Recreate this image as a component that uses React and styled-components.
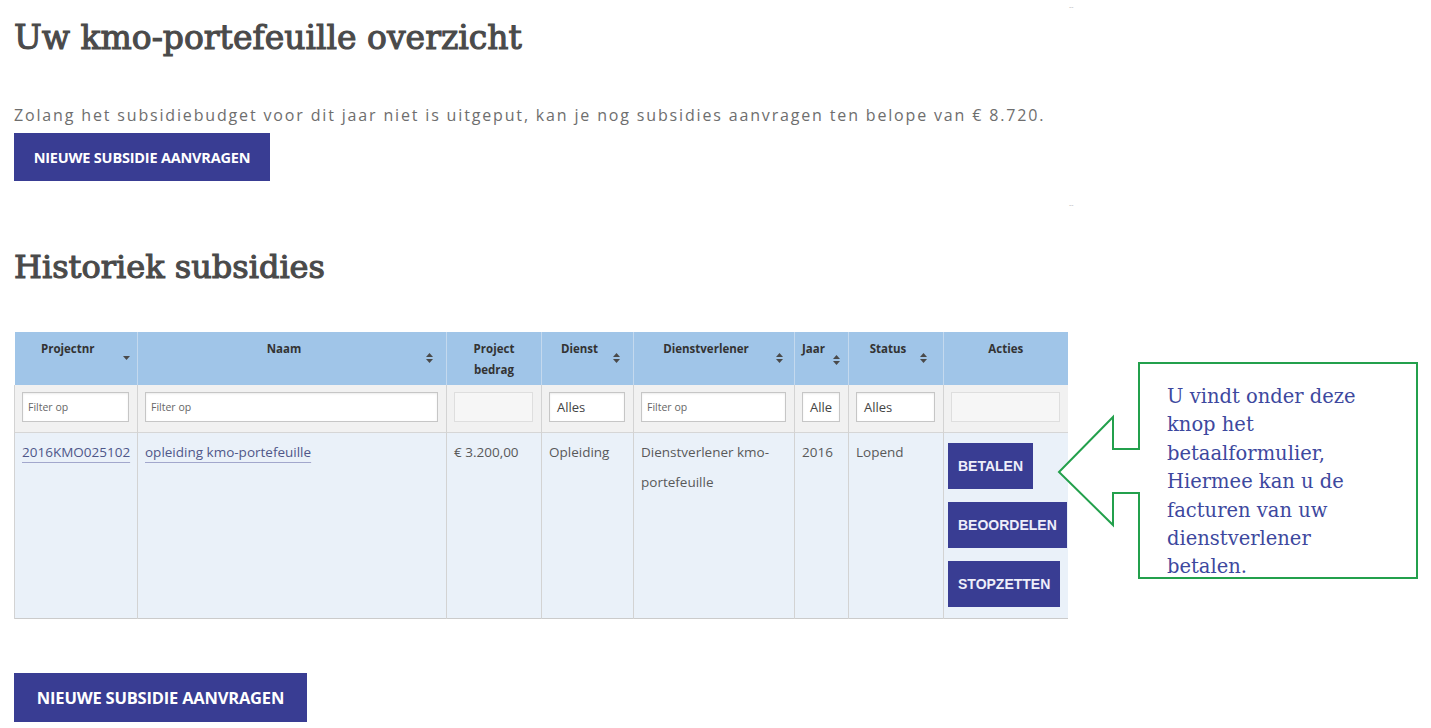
import React from 'react';
import styled, { createGlobalStyle } from 'styled-components';

const GlobalStyle = createGlobalStyle`
  html, body { margin: 0; padding: 0; background: #ffffff; }
  body { font-family: "Open Sans", "Liberation Sans", Arial, sans-serif; }
  * { box-sizing: border-box; }
`;

const Page = styled.div`
  position: relative;
  width: 1431px;
  height: 728px;
  overflow: hidden;
  padding: 0 0 0 14px;
`;

const Title = styled.h1`
  font-family: "DejaVu Serif", "Liberation Serif", serif;
  font-weight: 400;
  font-size: 33px;
  line-height: 40px;
  color: #4a4a4a;
  -webkit-text-stroke: 1.1px #4a4a4a;
  margin: 18px 0 0;
  letter-spacing: 0;
`;

const Intro = styled.p`
  font-size: 16px;
  line-height: 24px;
  color: #6e6e6e;
  margin: 45px 0 0;
  letter-spacing: 1.84px;
`;

const PrimaryButton = styled.button`
  display: block;
  width: ${(p) => (p.$large ? 293 : 256)}px;
  height: ${(p) => (p.$large ? 49 : 48)}px;
  margin: ${(p) => p.$mt}px 0 0;
  padding: 0;
  border: 0;
  background: #393d93;
  color: #ffffff;
  font-family: "Open Sans", "Liberation Sans", sans-serif;
  font-weight: 700;
  font-size: ${(p) => (p.$large ? 16.5 : 14.5)}px;
  letter-spacing: -0.2px;
  text-transform: uppercase;
`;

const SectionTitle = styled.h2`
  font-family: "DejaVu Serif", "Liberation Serif", serif;
  font-weight: 400;
  font-size: 32px;
  line-height: 40px;
  color: #4a4a4a;
  -webkit-text-stroke: 1.1px #4a4a4a;
  margin: 66px 0 0;
  letter-spacing: 0;
`;

const Table = styled.table`
  margin-top: 45px;
  width: 1053px;
  table-layout: fixed;
  border-collapse: collapse;
  font-family: "Open Sans", "Liberation Sans", sans-serif;
  border-bottom: 1px solid #cbcbcb;
`;

const HeadCell = styled.th`
  position: relative;
  height: 53px;
  vertical-align: top;
  padding: ${(p) => (p.$sortable ? '6px 22px 0 6px' : '6px 6px 0')};
  background: #a0c5e8;
  color: #333333;
  font-weight: 700;
  font-size: 11.5px;
  line-height: 21px;
  text-align: center;
  border-left: 1px solid #c4d9ee;
  &:first-child { border-left: 0; }
`;

const SortIcon = styled.svg`
  position: absolute;
  right: ${(p) => p.$right}px;
  top: ${(p) => p.$top}px;
`;

const FilterRow = styled.tr`
  background: #f1f1f1;
  border-bottom: 1px solid #d6d6d6;
`;

const FilterCell = styled.td`
  height: 47px;
  padding: 7px 8px 0 7px;
  vertical-align: top;
  border-left: 1px solid #d3d3d3;
`;

const FilterInput = styled.div`
  height: 30px;
  width: 100%;
  border: 1px solid ${(p) => (p.$disabled ? '#dedede' : '#c6c6c6')};
  box-shadow: ${(p) => (p.$disabled ? 'none' : 'inset 0 1px 2px rgba(0,0,0,0.08)')};
  background: ${(p) => (p.$disabled ? '#f6f6f6' : '#ffffff')};
  color: ${(p) => (p.$select ? '#444444' : '#666666')};
  font-size: ${(p) => (p.$select ? '13px' : '10.5px')};
  line-height: 28px;
  padding: 0 ${(p) => (p.$select ? '7px' : '5px')};
  white-space: nowrap;
  overflow: hidden;
`;

const DataRow = styled.tr`
  background: #eaf1f9;
`;

const DataCell = styled.td`
  height: 186px;
  vertical-align: top;
  padding: ${(p) => (p.$actions ? '10px 0 0 4px' : '4px 7px')};
  font-size: 13.5px;
  line-height: 30px;
  color: #595959;
  border-left: 1px solid #d3d3d3;
  overflow: visible;
`;

const RowLink = styled.a`
  color: #4f5789;
  text-decoration: underline;
  text-decoration-color: #a2a7cc;
  text-underline-offset: 5px;
`;

const ActionStack = styled.div`
  display: flex;
  flex-direction: column;
  align-items: flex-start;
  gap: 13px;
`;

const ActionButton = styled.button`
  height: 46px;
  padding: 0 10px;
  border: 0;
  background: #393d93;
  color: #eeeefa;
  font-family: "Liberation Sans", Arial, sans-serif;
  font-weight: 700;
  font-size: 14px;
  white-space: nowrap;
`;

const Callout = styled.div`
  position: absolute;
  left: 1057px;
  top: 362px;
  width: 362px;
  height: 218px;
`;

const CalloutShape = styled.svg`
  position: absolute;
  left: 0;
  top: 0;
`;

const CalloutText = styled.div`
  position: absolute;
  left: 110px;
  top: 21px;
  font-family: "DejaVu Serif", "Liberation Serif", serif;
  font-size: 19.5px;
  line-height: 28.4px;
  color: #3d489e;
  white-space: nowrap;
`;

const Mark = styled.span`
  position: absolute;
  left: 1069px;
  top: ${(p) => p.$top}px;
  font-size: 7px;
  line-height: 8px;
  color: #b5b5b5;
`;

const columns = [
  { key: 'projectnr', label: 'Projectnr', width: 123, sort: 'desc', right: 7, top: 24, filter: { text: 'Filter op' } },
  { key: 'naam', label: 'Naam', width: 309, sort: 'both', right: 13, top: 21, filter: { text: 'Filter op' } },
  { key: 'bedrag', label: ['Project', 'bedrag'], width: 95, filter: { disabled: true } },
  { key: 'dienst', label: 'Dienst', width: 92, sort: 'both', right: 13, top: 21, filter: { select: 'Alles' } },
  { key: 'dv', label: 'Dienstverlener', width: 161, sort: 'both', right: 11, top: 21, filter: { text: 'Filter op' } },
  { key: 'jaar', label: 'Jaar', width: 54, sort: 'both', right: 8, top: 23, filter: { select: 'Alle' } },
  { key: 'status', label: 'Status', width: 95, sort: 'both', right: 16, top: 21, filter: { select: 'Alles' } },
  { key: 'acties', label: 'Acties', width: 124, filter: { disabled: true } },
];

function Sort({ kind, right, top }) {
  if (kind === 'desc') {
    return (
      <SortIcon $right={right} $top={top} width="7" height="4" viewBox="0 0 7 4">
        <path d="M0 0 L7 0 L3.5 4 Z" fill="#4a4a4a" />
      </SortIcon>
    );
  }
  return (
    <SortIcon $right={right} $top={top} width="7" height="10" viewBox="0 0 7 10">
      <path d="M0 4 L7 4 L3.5 0 Z M0 6 L7 6 L3.5 10 Z" fill="#4a4a4a" />
    </SortIcon>
  );
}

const calloutLines = [
  'U vindt onder deze',
  'knop het',
  'betaalformulier,',
  'Hiermee kan u de',
  'facturen van uw',
  'dienstverlener',
  'betalen.',
];

export default function App() {
  return (
    <>
      <GlobalStyle />
      <Page>
        <Title>Uw kmo-portefeuille overzicht</Title>
        <Intro>
          Zolang het subsidiebudget voor dit jaar niet is uitgeput, kan je nog subsidies aanvragen ten belope van € 8.720.
        </Intro>
        <PrimaryButton $mt={6}>Nieuwe subsidie aanvragen</PrimaryButton>

        <SectionTitle>Historiek subsidies</SectionTitle>

        <Table>
          <colgroup>
            {columns.map((c) => (
              <col key={c.key} style={{ width: c.width }} />
            ))}
          </colgroup>
          <thead>
            <tr>
              {columns.map((c) => (
                <HeadCell key={c.key} $sortable={!!c.sort}>
                  {Array.isArray(c.label) ? (
                    <>
                      {c.label[0]}
                      <br />
                      {c.label[1]}
                    </>
                  ) : (
                    c.label
                  )}
                  {c.sort && <Sort kind={c.sort} right={c.right} top={c.top} />}
                </HeadCell>
              ))}
            </tr>
          </thead>
          <tbody>
            <FilterRow>
              {columns.map((c) => (
                <FilterCell key={c.key}>
                  <FilterInput $disabled={c.filter.disabled} $select={!!c.filter.select}>
                    {c.filter.select || c.filter.text || ''}
                  </FilterInput>
                </FilterCell>
              ))}
            </FilterRow>
            <DataRow>
              <DataCell>
                <RowLink>2016KMO025102</RowLink>
              </DataCell>
              <DataCell>
                <RowLink>opleiding kmo-portefeuille</RowLink>
              </DataCell>
              <DataCell>€ 3.200,00</DataCell>
              <DataCell>Opleiding</DataCell>
              <DataCell>
                Dienstverlener kmo-
                <br />
                portefeuille
              </DataCell>
              <DataCell>2016</DataCell>
              <DataCell>Lopend</DataCell>
              <DataCell $actions>
                <ActionStack>
                  <ActionButton>BETALEN</ActionButton>
                  <ActionButton>BEOORDELEN</ActionButton>
                  <ActionButton>STOPZETTEN</ActionButton>
                </ActionStack>
              </DataCell>
            </DataRow>
          </tbody>
        </Table>

        <PrimaryButton $large $mt={54}>Nieuwe subsidie aanvragen</PrimaryButton>

        <Callout>
          <CalloutShape width="362" height="218" viewBox="0 0 362 218">
            <polygon
              points="82,1 360,1 360,216 82,216 82,131 56,131 56,163 2,110 56,55 56,87 82,87"
              fill="#ffffff"
              stroke="#23a04c"
              strokeWidth="2"
            />
          </CalloutShape>
          <CalloutText>
            {calloutLines.map((l) => (
              <div key={l}>{l}</div>
            ))}
          </CalloutText>
        </Callout>

        <Mark $top={3}>--</Mark>
        <Mark $top={201}>--</Mark>
      </Page>
    </>
  );
}
